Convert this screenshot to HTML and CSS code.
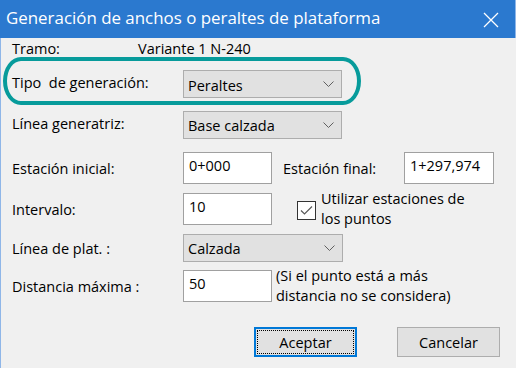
FILE: index.html
```html
<!DOCTYPE html>
<html lang="es">
<head>
<meta charset="utf-8">
<title>Generación de anchos o peraltes de plataforma</title>
<link rel="stylesheet" href="styles.css">
</head>
<body>
<div class="win">
  <div class="titlebar">
    <span class="title">Generación de anchos o peraltes de plataforma</span>
    <svg class="close" width="16" height="16" viewBox="0 0 16 16"><path d="M1 1 L15 15 M15 1 L1 15" stroke="#fff" stroke-width="1.3" fill="none"/></svg>
  </div>
  <div class="content">
    <div class="row r-tramo">
      <span class="lbl lbl-tramo">Tramo:</span>
      <span>Variante 1 N-240</span>
    </div>
    <div class="row r-tipo">
      <span class="lbl">Tipo&nbsp; de generación:</span>
      <div class="select"><span>Peraltes</span><svg class="chev" width="11" height="6" viewBox="0 0 11 6"><path d="M0.5 0.5 L5.5 5.5 L10.5 0.5" stroke="#606060" stroke-width="1" fill="none"/></svg></div>
    </div>
    <div class="row r-gen">
      <span class="lbl">Línea generatriz:</span>
      <div class="select"><span>Base calzada</span><svg class="chev" width="11" height="6" viewBox="0 0 11 6"><path d="M0.5 0.5 L5.5 5.5 L10.5 0.5" stroke="#606060" stroke-width="1" fill="none"/></svg></div>
    </div>
    <div class="row r-est">
      <span class="lbl">Estación inicial:</span>
      <div class="input">0+000</div>
      <span class="lbl-final">Estación final:</span>
      <div class="input">1+297,974</div>
    </div>
    <div class="row r-int">
      <span class="lbl">Intervalo:</span>
      <div class="input">10</div>
      <div class="check">
        <span class="box"><svg width="13" height="11" viewBox="0 0 13 11"><path d="M1 5.5 L4.5 9 L12 1.5" stroke="#5a5a5a" stroke-width="1.2" fill="none"/></svg></span>
        <span class="check-text">Utilizar estaciones de<br>los puntos</span>
      </div>
    </div>
    <div class="row r-plat">
      <span class="lbl">Línea de plat. :</span>
      <div class="select"><span>Calzada</span><svg class="chev" width="11" height="6" viewBox="0 0 11 6"><path d="M0.5 0.5 L5.5 5.5 L10.5 0.5" stroke="#606060" stroke-width="1" fill="none"/></svg></div>
    </div>
    <div class="row r-dist">
      <span class="lbl">Distancia máxima :</span>
      <div class="input">50</div>
      <span class="note">(Si el punto está a más<br>distancia no se considera)</span>
    </div>
    <div class="buttons">
      <button class="btn btn-default"><span class="focus">Aceptar</span></button>
      <button class="btn">Cancelar</button>
    </div>
  </div>
  <div class="highlight"></div>
</div>
</body>
</html>
```
FILE: styles.css
```css
html, body {
  margin: 0;
  padding: 0;
  background: #f0f0f0;
}
.win {
  position: relative;
  width: 516px;
  height: 368px;
  background: #f0f0f0;
  font-family: "Open Sans", "Noto Sans", sans-serif;
  font-size: 14.5px;
  color: #000;
  overflow: hidden;
}
.titlebar {
  height: 38px;
  background: #2b79cf;
  border-right: 1px solid #8fb6e8;
  display: flex;
  align-items: center;
  justify-content: space-between;
  padding: 0 16px 0 6px;
  box-sizing: border-box;
}
.title {
  color: #fff;
  font-size: 16.9px;
  line-height: 1;
  margin-top: -1px;
}
.close {
  display: block;
  margin-top: 1px;
}
.content {
  height: 330px;
  border-left: 1px solid #8fb6e8;
  padding-left: 11px;
  box-sizing: border-box;
  display: flex;
  flex-direction: column;
}
.row {
  display: flex;
  align-items: center;
}
.lbl {
  width: 171px;
  flex: none;
  white-space: nowrap;
}
.lbl-tramo { width: 126px; }
.r-tramo { height: 20px; }
.r-tipo { margin-top: 12px; height: 28px; }
.r-gen { margin-top: 13px; height: 28px; }
.r-est { margin-top: 13px; height: 32px; }
.r-int { margin-top: 9px; height: 32px; }
.r-plat { margin-top: 9px; height: 28px; }
.r-dist { margin-top: 8px; height: 32px; }
.r-tipo .lbl, .r-gen .lbl { margin-top: -3px; }
.select {
  width: 159px;
  height: 28px;
  box-sizing: border-box;
  background: #e1e1e1;
  border: 1px solid #adadad;
  display: flex;
  align-items: center;
  justify-content: space-between;
  padding: 0 7px 0 4px;
}
.r-plat .select { width: 160px; }
.r-tipo .select span { margin-top: 2px; }
.input {
  width: 89px;
  height: 32px;
  box-sizing: border-box;
  background: #fff;
  border: 1px solid #a0a0a0;
  padding: 3px 5px 0;
  flex: none;
}
.r-est .input + .lbl-final + .input { width: 90px; }
.lbl-final {
  margin-left: 11px;
  width: 121px;
  flex: none;
}
.check {
  display: flex;
  align-items: center;
  margin-left: 25px;
}
.box {
  width: 19px;
  height: 19px;
  box-sizing: border-box;
  border: 1px solid #333;
  background: #fff;
  display: flex;
  align-items: center;
  justify-content: center;
  margin-right: 5px;
  margin-top: 2px;
}
.box svg { display: block; }
.check-text {
  line-height: 20px;
}
.note {
  margin-left: 4px;
  line-height: 20px;
}
.buttons {
  display: flex;
  gap: 40px;
  margin-top: 25px;
  padding-left: 242px;
}
.btn {
  width: 103px;
  height: 30px;
  box-sizing: border-box;
  background: #e1e1e1;
  border: 1px solid #adadad;
  font: inherit;
  color: #000;
  padding: 0;
  display: flex;
  align-items: center;
  justify-content: center;
}
.btn-default {
  border: 2px solid #0078d7;
  padding: 1px;
}
.focus {
  flex: 1;
  align-self: stretch;
  border: 1px dotted #000;
  display: flex;
  align-items: center;
  justify-content: center;
}
.highlight {
  position: absolute;
  left: 3px;
  top: 57px;
  width: 358px;
  height: 48px;
  box-sizing: border-box;
  border: 4px solid #079b9b;
  border-radius: 18px / 24px;
}
```
